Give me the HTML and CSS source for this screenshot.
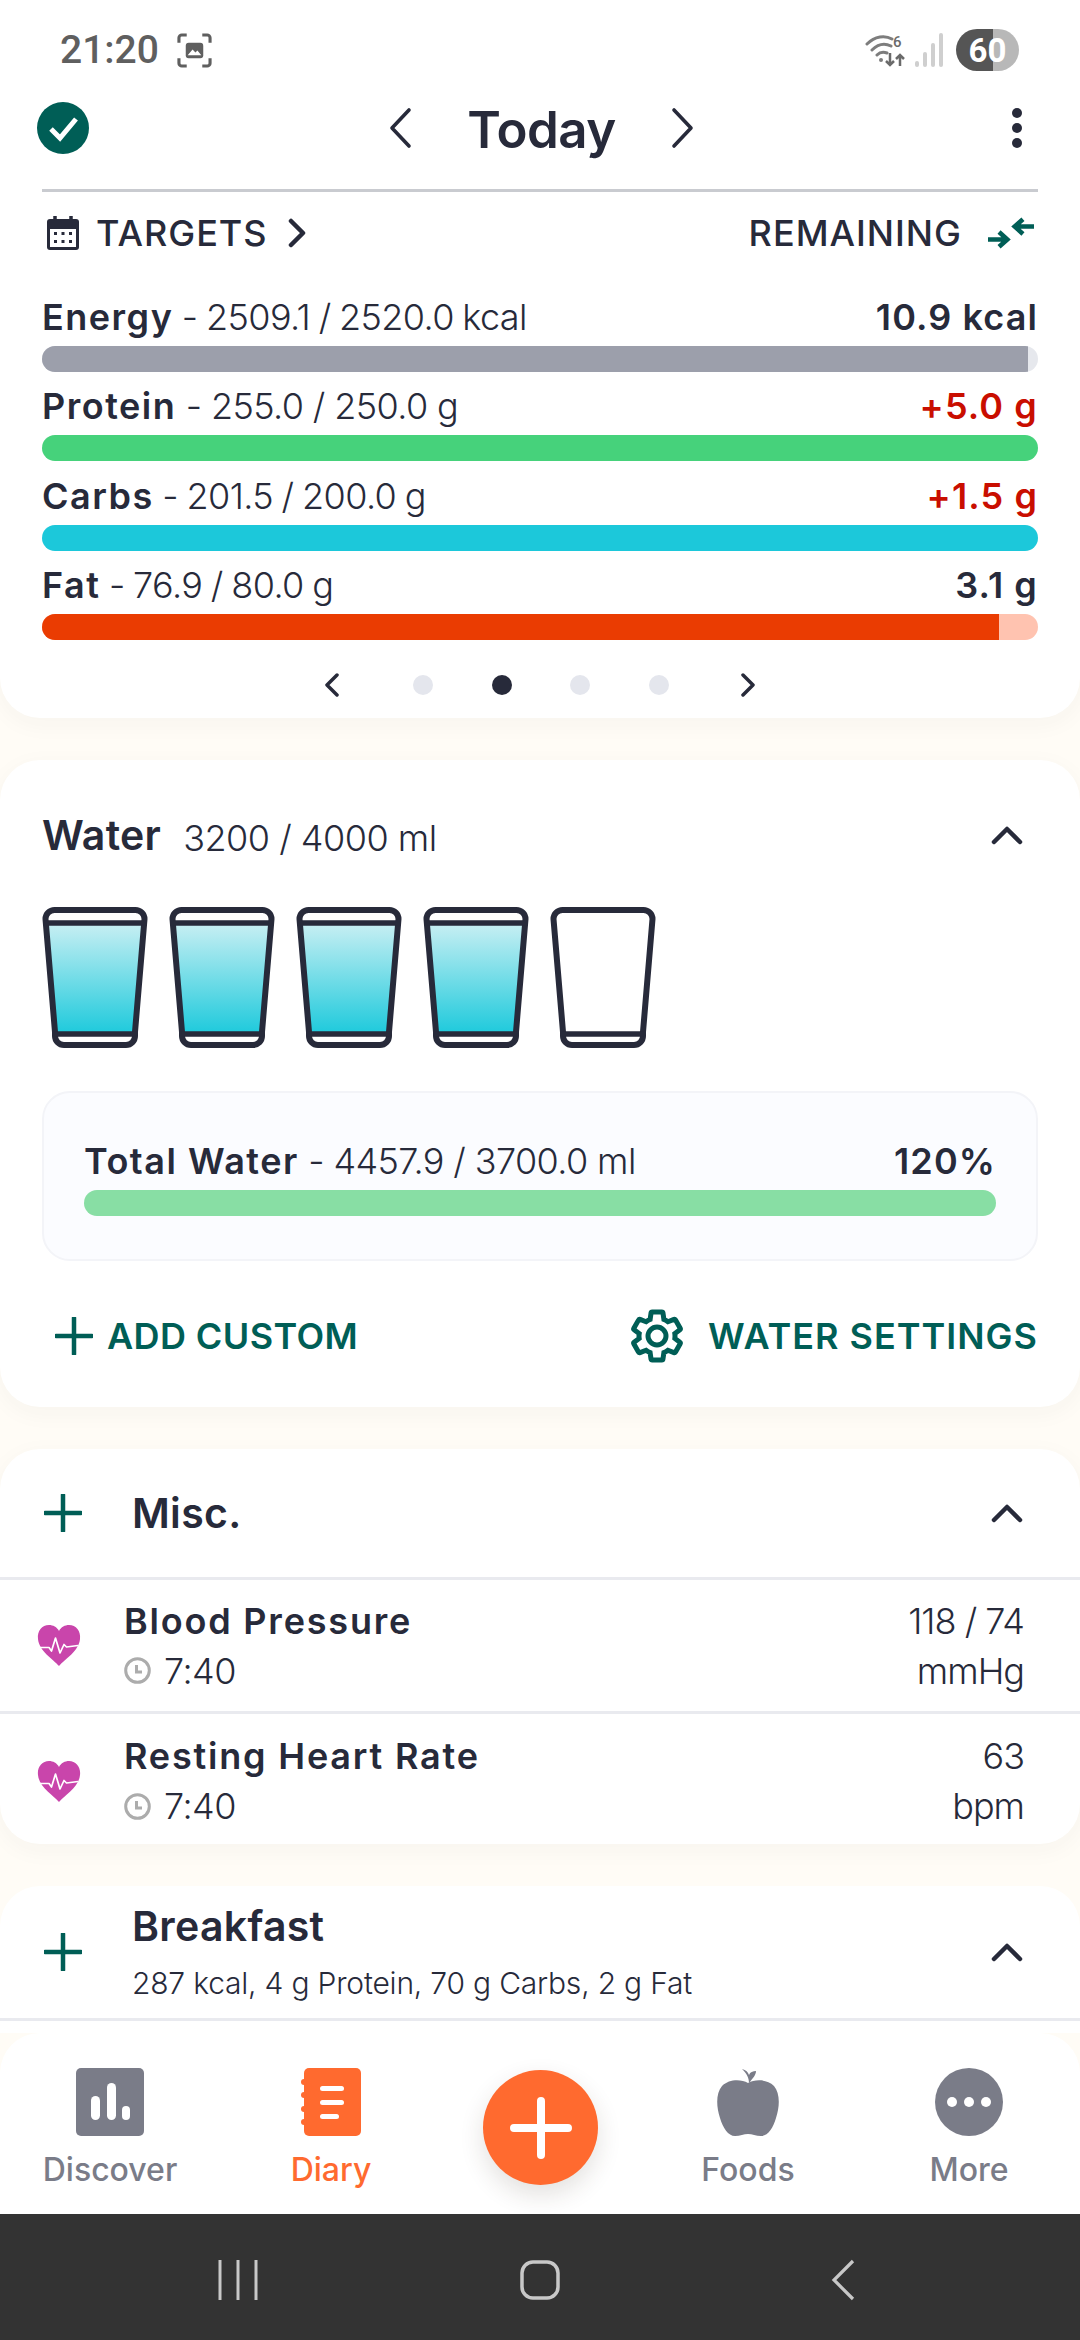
FILE: index.html
```html
<!DOCTYPE html>
<html lang="en">
<head>
<meta charset="utf-8">
<title>Diary</title>
<link rel="stylesheet" href="styles.css">
</head>
<body>
<svg class="defs" aria-hidden="true">
  <defs>
    <linearGradient id="water" x1="0" y1="0" x2="0" y2="1">
      <stop offset="0" stop-color="#c8eff3"/>
      <stop offset="1" stop-color="#1fcadc"/>
    </linearGradient>
    <symbol id="plus" viewBox="0 0 38 38"><path d="M19 1V37M1 19H37" fill="none" stroke="currentColor" stroke-width="4.5" stroke-linecap="round"/></symbol>
    <symbol id="chev-up" viewBox="0 0 32 20"><path d="M3 17 16 4 29 17" fill="none" stroke="#272a3a" stroke-width="4.5" stroke-linecap="round" stroke-linejoin="round"/></symbol>
    <symbol id="heart" viewBox="0 0 44 41">
      <path d="M22 41C16 34 2 26 1 14 0 6 5 0 12 0 16 0 20 2 22 6 24 2 28 0 32 0 39 0 44 6 43 14 42 26 28 34 22 41Z" fill="#c945ab"/>
      <path d="M3 22.500H12L14.500 26 18.500 13 23 28 27 19.500 29.500 22 41 20.500" fill="none" stroke="#fff" stroke-width="1.700" stroke-linejoin="round"/>
    </symbol>
    <symbol id="clock" viewBox="0 0 27 27">
      <circle cx="13.500" cy="13.500" r="11.800" fill="none" stroke="#acacac" stroke-width="3"/>
      <path d="M12.500 8V15H18" fill="none" stroke="#acacac" stroke-width="3"/>
    </symbol>
    <symbol id="glass" viewBox="0 0 106 141">
      <path d="M3.500 12a9 9 0 0 1 9-9h81a9 9 0 0 1 9 9L93 125v4a9 9 0 0 1-9 9H22a9 9 0 0 1-9-9v-4Z" fill="#fff" stroke="#272a3a" stroke-width="6" stroke-linejoin="round"/>
      <path d="M12.500 127H93.500" fill="none" stroke="#272a3a" stroke-width="5.500"/>
    </symbol>
    <symbol id="glass-full" viewBox="0 0 106 141">
      <path d="M5 16H101L93 126H13Z" fill="url(#water)"/>
      <path d="M3.500 12a9 9 0 0 1 9-9h81a9 9 0 0 1 9 9L93 125v4a9 9 0 0 1-9 9H22a9 9 0 0 1-9-9v-4Z" fill="none" stroke="#272a3a" stroke-width="6" stroke-linejoin="round"/>
      <path d="M4 16H102M12.500 127H93.500" fill="none" stroke="#272a3a" stroke-width="5.500"/>
    </symbol>
  </defs>
</svg>

<div class="app">
  <main class="scroll">
    <section class="card top-card">
      <div class="status">
        <div class="status-left">
          <span class="clock-text">21:20</span>
          <svg class="shot" viewBox="0 0 36 36"><path d="M2 10V5a3 3 0 0 1 3-3h5M26 2h5a3 3 0 0 1 3 3v5M34 26v5a3 3 0 0 1-3 3h-5M10 34H5a3 3 0 0 1-3-3v-5" fill="none" stroke="#5f5f5f" stroke-width="3.200"/><rect x="9" y="10" width="18" height="16" rx="3" fill="#5f5f5f"/><path d="M11 23l5-6 3 3 2-2 4 5Z" fill="#fff"/></svg>
        </div>
        <div class="status-right">
          <svg class="wifi" viewBox="0 0 40 34"><path d="M2 11C10 3 20 2 27 6M7 17C13 11 20 10 26 13M12 22c3-3 7-3 10-2" fill="none" stroke="#7d7d7d" stroke-width="3" stroke-linecap="round"/><circle cx="16" cy="27" r="2" fill="#7d7d7d"/><path d="M25 20V32M21 28l4 4 4-4M35 33V22M31 26l4-4 4 4" fill="none" stroke="#6a6a6a" stroke-width="2.500"/><text class="wifi-six" x="28" y="14">6</text></svg>
          <svg class="signal" viewBox="0 0 28 36"><g fill="#cfcfcf"><rect x="0" y="29" width="4" height="6" rx="2"/><rect x="8" y="20" width="4" height="15" rx="2"/><rect x="16" y="11" width="4" height="24" rx="2"/><rect x="24" y="1" width="4" height="34" rx="2"/></g></svg>
          <div class="battery"><span>60</span></div>
        </div>
      </div>

      <header class="day">
        <svg class="done" viewBox="0 0 52 52"><circle cx="26" cy="26" r="26" fill="#005e56"/><path d="M14 27 23 36 39 17" fill="none" stroke="#fff" stroke-width="5"/></svg>
        <div class="day-nav">
          <svg class="day-arrow" viewBox="0 0 24 42"><path d="M21 3 4 21 21 39" fill="none" stroke="#272a3a" stroke-width="3.600" stroke-linecap="round" stroke-linejoin="round"/></svg>
          <h1>Today</h1>
          <svg class="day-arrow" viewBox="0 0 24 42"><path d="M3 3 20 21 3 39" fill="none" stroke="#272a3a" stroke-width="3.600" stroke-linecap="round" stroke-linejoin="round"/></svg>
        </div>
        <svg class="kebab" viewBox="0 0 12 42"><g fill="#272a3a"><circle cx="6" cy="6" r="5"/><circle cx="6" cy="21" r="5"/><circle cx="6" cy="36" r="5"/></g></svg>
      </header>

      <div class="rule"></div>

      <div class="targets">
        <div class="targets-left">
          <svg class="cal" viewBox="0 0 32 34"><path d="M8 0v5M24 0v5" stroke="#272a3a" stroke-width="3.500"/><rect y="3" width="32" height="31" rx="3" fill="#272a3a"/><rect x="3" y="13" width="26" height="18" fill="#fff"/><g fill="#272a3a"><rect x="7" y="16" width="3" height="3"/><rect x="14.500" y="16" width="3" height="3"/><rect x="22" y="16" width="3" height="3"/><rect x="7" y="24" width="3" height="3"/><rect x="14.500" y="24" width="3" height="3"/><rect x="22" y="24" width="3" height="3"/></g></svg>
          <span>TARGETS</span>
          <svg class="tchev" viewBox="0 0 18 30"><path d="M3 3 15 15 3 27" fill="none" stroke="#272a3a" stroke-width="4.500" stroke-linecap="round" stroke-linejoin="round"/></svg>
        </div>
        <div class="targets-right">
          <span>REMAINING</span>
          <svg class="swap" viewBox="0 0 50 34"><path d="M50 10H30M38 2 29 10 38 18M0 24H20M12 16 21 24 12 32" fill="none" stroke="#005e56" stroke-width="5"/></svg>
        </div>
      </div>

      <div class="metrics">
        <div class="metric">
          <div class="metric-row"><span class="tight"><b>Energy</b> - 2509.1 / 2520.0 kcal</span><b>10.9 kcal</b></div>
          <div class="bar bar-energy"><i style="width:99%"></i></div>
        </div>
        <div class="metric">
          <div class="metric-row"><span><b>Protein</b> - 255.0 / 250.0 g</span><b class="over">+5.0 g</b></div>
          <div class="bar bar-protein"><i style="width:100%"></i></div>
        </div>
        <div class="metric">
          <div class="metric-row"><span class="tight"><b>Carbs</b> - 201.5 / 200.0 g</span><b class="over">+1.5 g</b></div>
          <div class="bar bar-carbs"><i style="width:100%"></i></div>
        </div>
        <div class="metric">
          <div class="metric-row"><span class="tight"><b>Fat</b> - 76.9 / 80.0 g</span><b>3.1 g</b></div>
          <div class="bar bar-fat"><i style="width:96.1%"></i></div>
        </div>
      </div>

      <div class="pager">
        <svg class="pager-arrow" viewBox="0 0 16 24"><path d="M13 2 3 12 13 22" fill="none" stroke="#272a3a" stroke-width="3.500" stroke-linecap="round" stroke-linejoin="round"/></svg>
        <span class="dot"></span>
        <span class="dot dot-on"></span>
        <span class="dot"></span>
        <span class="dot"></span>
        <svg class="pager-arrow" viewBox="0 0 16 24"><path d="M3 2 13 12 3 22" fill="none" stroke="#272a3a" stroke-width="3.500" stroke-linecap="round" stroke-linejoin="round"/></svg>
      </div>
    </section>

    <section class="card water-card">
      <div class="water-head">
        <h2>Water</h2>
        <span class="water-amount">3200 / 4000 ml</span>
        <svg class="chev"><use href="#chev-up"/></svg>
      </div>
      <div class="glasses">
        <svg class="glass"><use href="#glass-full"/></svg>
        <svg class="glass"><use href="#glass-full"/></svg>
        <svg class="glass"><use href="#glass-full"/></svg>
        <svg class="glass"><use href="#glass-full"/></svg>
        <svg class="glass"><use href="#glass"/></svg>
      </div>
      <div class="total">
        <div class="metric-row"><span><b>Total Water</b> - 4457.9 / 3700.0 ml</span><b>120%</b></div>
        <div class="bar bar-total"><i style="width:100%"></i></div>
      </div>
      <div class="water-actions">
        <div class="action">
          <svg class="action-plus"><use href="#plus"/></svg>
          <span>ADD CUSTOM</span>
        </div>
        <div class="action action-settings">
          <svg class="gear" viewBox="0 0 24 24"><path d="M19.140 12.940c.04-.3.06-.61.06-.94 0-.32-.02-.64-.07-.94l2.030-1.580c.18-.14.23-.41.12-.61l-1.920-3.320c-.12-.22-.37-.29-.59-.22l-2.390.96c-.5-.38-1.030-.7-1.620-.94l-.36-2.540c-.04-.24-.24-.41-.48-.41h-3.840c-.24 0-.43.17-.47.41l-.36 2.540c-.59.24-1.130.57-1.620.94l-2.390-.96c-.22-.08-.47 0-.59.22L2.740 8.870c-.12.21-.08.47.12.61l2.030 1.580c-.05.3-.09.63-.09.94s.02.64.07.94l-2.030 1.580c-.18.14-.23.41-.12.61l1.920 3.320c.12.22.37.29.59.22l2.390-.96c.5.38 1.030.7 1.620.94l.36 2.540c.05.24.24.41.48.41h3.840c.24 0 .44-.17.47-.41l.36-2.540c.59-.24 1.130-.56 1.620-.94l2.390.96c.22.08.47 0 .59-.22l1.920-3.320c.12-.22.07-.47-.12-.61l-2.010-1.580zM12 15.600c-1.980 0-3.600-1.620-3.600-3.600s1.620-3.600 3.600-3.600 3.600 1.620 3.600 3.600-1.620 3.600-3.600 3.600z" fill="none" stroke="#005e56" stroke-width="2"/></svg>
          <span>WATER SETTINGS</span>
        </div>
      </div>
    </section>

    <section class="card misc-card">
      <div class="section-head misc-head">
        <svg class="section-plus"><use href="#plus"/></svg>
        <div class="section-title"><h2>Misc.</h2></div>
        <svg class="chev"><use href="#chev-up"/></svg>
      </div>
      <div class="entry">
        <svg class="heart"><use href="#heart"/></svg>
        <div class="entry-main">
          <div class="entry-name">Blood Pressure</div>
          <div class="entry-time"><svg class="clock"><use href="#clock"/></svg><span>7:40</span></div>
        </div>
        <div class="entry-value"><div>118 / 74</div><div>mmHg</div></div>
      </div>
      <div class="entry">
        <svg class="heart"><use href="#heart"/></svg>
        <div class="entry-main">
          <div class="entry-name">Resting Heart Rate</div>
          <div class="entry-time"><svg class="clock"><use href="#clock"/></svg><span>7:40</span></div>
        </div>
        <div class="entry-value"><div>63</div><div>bpm</div></div>
      </div>
    </section>

    <section class="card meal-card">
      <div class="section-head meal-head">
        <svg class="section-plus"><use href="#plus"/></svg>
        <div class="section-title">
          <h2>Breakfast</h2>
          <p>287 kcal, 4 g Protein, 70 g Carbs, 2 g Fat</p>
        </div>
        <svg class="chev"><use href="#chev-up"/></svg>
      </div>
    </section>
  </main>

  <nav class="tabs">
    <div class="tab">
      <svg class="tab-icon" viewBox="0 0 68 68"><rect width="68" height="68" rx="5" fill="#7a7c88"/><g fill="#fff"><rect x="15" y="28" width="9" height="24" rx="4.500"/><rect x="31" y="15" width="9" height="37" rx="4.500"/><rect x="46" y="38" width="8" height="14" rx="4"/></g></svg>
      <span>Discover</span>
    </div>
    <div class="tab tab-on">
      <svg class="tab-icon" viewBox="0 0 60 68"><rect x="3" width="57" height="68" rx="5" fill="#ff6a2f"/><g fill="#ff6a2f"><circle cx="3" cy="14" r="3"/><circle cx="3" cy="27" r="3"/><circle cx="3" cy="41" r="3"/><circle cx="3" cy="54" r="3"/></g><g fill="#fff"><rect x="19" y="18" width="24" height="5" rx="2.500"/><rect x="19" y="32" width="24" height="5" rx="2.500"/><rect x="19" y="46" width="19" height="5" rx="2.500"/></g></svg>
      <span>Diary</span>
    </div>
    <div class="fab">
      <svg class="fab-plus" viewBox="0 0 62 62"><path d="M31 4V58M4 31H58" stroke="#fff" stroke-width="8" stroke-linecap="round"/></svg>
    </div>
    <div class="tab">
      <svg class="tab-icon" viewBox="0 0 62 68"><path d="M31 15C24 11 12 11 5 18-1 25-1 38 3 50 6 60 11 68 18 68 23 68 27 66 31 66 35 66 39 68 44 68 51 68 56 60 59 50 63 38 63 25 57 18 50 11 38 11 31 15Z" fill="#7a7c88"/><path d="M32 15C32 10 30 6 25 1 29 2 31 4 32 7 33 4 36 3 39 3 39 7 36 10 32 15Z" fill="#7a7c88"/></svg>
      <span>Foods</span>
    </div>
    <div class="tab">
      <svg class="tab-icon" viewBox="0 0 68 68"><circle cx="34" cy="34" r="34" fill="#7a7c88"/><g fill="#fff"><circle cx="17" cy="34" r="5"/><circle cx="34" cy="34" r="5"/><circle cx="51" cy="34" r="5"/></g></svg>
      <span>More</span>
    </div>
  </nav>

  <footer class="sysbar">
    <svg class="sys-recents" viewBox="0 0 40 40"><path d="M2 0V40M20 0V40M38 0V40" stroke="#c8c8c8" stroke-width="3"/></svg>
    <svg class="sys-home" viewBox="0 0 40 40"><rect x="2" y="2" width="36" height="36" rx="11" fill="none" stroke="#c8c8c8" stroke-width="3.500"/></svg>
    <svg class="sys-back" viewBox="0 0 24 42"><path d="M22 2 3 21 22 40" fill="none" stroke="#c8c8c8" stroke-width="3.200"/></svg>
  </footer>
</div>
</body>
</html>
```

FILE: styles.css
```css
* { box-sizing: border-box; }

html, body { margin: 0; padding: 0; }

body {
  width: 1080px;
  height: 2340px;
  overflow: hidden;
  font-family: "Inter", "Liberation Sans", sans-serif;
  color: #272a3a;
  background: #fffcf6;
}

h1, h2, p { margin: 0; }

svg { display: block; flex: none; }

.defs { width: 0; height: 0; }

.app {
  height: 2340px;
  display: flex;
  flex-direction: column;
}

.scroll {
  height: 2033px;
  overflow: hidden;
  background: #fffcf6;
  display: flex;
  flex-direction: column;
  gap: 42px;
}

.card {
  flex: none;
  background: #fff;
  border-radius: 40px;
  box-shadow: 0 6px 24px rgba(60, 60, 40, .04);
}

.top-card {
  height: 718px;
  padding: 0 42px;
  border-radius: 0 0 40px 40px;
}

.status {
  height: 96px;
  margin: 0 19px 0 18px;
  display: flex;
  align-items: center;
  justify-content: space-between;
  padding-top: 4px;
}

.status-left { display: flex; align-items: center; gap: 18px; }

.clock-text {
  font-family: "Roboto", sans-serif;
  font-size: 39px;
  font-weight: 500;
  color: #5f5f5f;
}

.shot { width: 35px; height: 35px; }

.status-right { display: flex; align-items: center; gap: 10px; }

.wifi { width: 40px; height: 34px; }

.wifi-six {
  font-family: "Roboto", sans-serif;
  font-size: 15px;
  font-weight: 500;
  fill: #6a6a6a;
}

.signal { width: 28px; height: 36px; margin-right: 3px; }

.battery {
  width: 63px;
  height: 42px;
  border-radius: 21px;
  background: linear-gradient(90deg, #555 0 59%, #b8b8b8 59% 100%);
  color: #fff;
  display: flex;
  align-items: center;
  justify-content: center;
  font-family: "Roboto", sans-serif;
  font-size: 33px;
  font-weight: 700;
}

.day {
  height: 64px;
  display: flex;
  align-items: center;
  justify-content: space-between;
  margin-left: -5px;
  padding-right: 15px;
}

.done { width: 52px; height: 52px; }

.day-nav {
  flex: 1;
  display: flex;
  align-items: center;
  justify-content: center;
  gap: 55px;
  padding-right: 17px;
}

.day-arrow { width: 24px; height: 42px; }

h1 {
  font-size: 51px;
  font-weight: 600;
  letter-spacing: -.5px;
  line-height: 64px;
  padding-top: 3px;
}

.kebab { width: 12px; height: 42px; }

.rule {
  height: 3px;
  margin-top: 29px;
  background: #c9cbd0;
}

.targets {
  height: 40px;
  margin-top: 21px;
  display: flex;
  align-items: center;
  justify-content: space-between;
  font-size: 36px;
  font-weight: 500;
  letter-spacing: 1px;
}

.targets-left { display: flex; align-items: center; gap: 17px; padding-left: 5px; }

.targets-right { display: flex; align-items: center; gap: 26px; padding-right: 4px; }

.cal { width: 32px; height: 34px; }

.tchev { width: 18px; height: 30px; margin-left: 3px; }

.swap { width: 46px; height: 32px; }

.metrics {
  margin-top: 41px;
  display: flex;
  flex-direction: column;
  gap: 11.300px;
}

.metric-row {
  height: 52px;
  display: flex;
  justify-content: space-between;
  align-items: center;
  font-size: 36px;
  font-weight: 300;
  line-height: 46px;
  padding-bottom: 6px;
}

.metric-row b { font-weight: 600; letter-spacing: 1.100px; }

.metric-row span { letter-spacing: -.6px; }

.metric-row span b { letter-spacing: 1.500px; }

.metric-row .tight { word-spacing: -1px; }

.over { color: #c90e00; }

.bar {
  height: 26px;
  border-radius: 13px;
  overflow: hidden;
}

.bar i { display: block; height: 100%; }

.bar-energy { background: #e6e8ed; }
.bar-energy i { background: #9c9fab; }
.bar-protein { background: #c8f0d5; }
.bar-protein i { background: #46d27b; }
.bar-carbs { background: #c0eff4; }
.bar-carbs i { background: #1cc8da; }
.bar-fat { background: #ffc3b0; }
.bar-fat i { background: #ea3c02; }
.bar-total { background: #88dea4; }
.bar-total i { background: #88dea4; }

.pager {
  margin-top: 34px;
  height: 22px;
  display: flex;
  align-items: center;
  justify-content: center;
}

.pager-arrow { width: 16px; height: 24px; }

.dot {
  width: 20px;
  height: 20px;
  border-radius: 50%;
  background: #e4e6ed;
  margin-left: 58.800px;
}

.dot:nth-of-type(1) { margin-left: 73px; }

.dot-on { background: #272a3a; }

.pager .pager-arrow:last-child { margin-left: 71px; }

.water-card {
  height: 647px;
  padding: 0 42px;
}

.water-head {
  height: 150px;
  display: flex;
  align-items: center;
  gap: 22px;
  padding-right: 15px;
}

h2 {
  font-size: 41px;
  font-weight: 600;
  letter-spacing: .3px;
  line-height: 48px;
}

.water-amount {
  font-size: 36px;
  font-weight: 300;
  letter-spacing: -.5px;
  padding-top: 6px;
  flex: 1;
}

.chev { width: 32px; height: 20px; }

.glasses {
  display: flex;
  gap: 21px;
  margin-top: -3px;
}

.glass { width: 106px; height: 141px; }

.total {
  height: 170px;
  margin-top: 43px;
  padding: 45px 40px 0;
  background: #fbfcff;
  border: 2px solid #f3f4f8;
  border-radius: 28px;
}

.water-actions {
  margin-top: 45px;
  height: 60px;
  display: flex;
  align-items: center;
  justify-content: space-between;
  color: #005e56;
  font-size: 36px;
  font-weight: 600;
}

.action { display: flex; align-items: center; gap: 14px; padding-left: 13px; letter-spacing: .4px; }

.action-settings { gap: 21px; padding-left: 0; letter-spacing: 1px; }

.action-plus { width: 38px; height: 38px; }

.gear { width: 60px; height: 60px; }

.misc-card { height: 395px; }

.section-head {
  display: flex;
  align-items: center;
  padding: 0 57px 0 44px;
  border-bottom: 3px solid #e9eaef;
}

.misc-head { height: 131px; }

.meal-head { height: 135px; }

.section-plus { width: 38px; height: 38px; color: #005e56; }

.section-title { flex: 1; padding-left: 50px; }

.section-title p {
  font-size: 30px;
  font-weight: 300;
  letter-spacing: -.2px;
  line-height: 40px;
  margin-top: 13px;
}

.entry {
  height: 134px;
  display: flex;
  align-items: center;
  padding: 0 56px 0 37px;
  border-bottom: 3px solid #e9eaef;
}

.entry:last-child { border-bottom: 0; }

.heart { width: 44px; height: 41px; }

.entry-main {
  flex: 1;
  padding-left: 43px;
}

.entry-name {
  font-size: 36px;
  font-weight: 600;
  letter-spacing: 1.800px;
  line-height: 44px;
}

.entry-time {
  display: flex;
  align-items: center;
  gap: 13px;
  font-size: 36px;
  font-weight: 300;
  letter-spacing: -.5px;
  line-height: 44px;
  margin-top: 6px;
}

.clock { width: 27px; height: 27px; }

.entry-value {
  text-align: right;
  font-size: 36px;
  font-weight: 300;
  line-height: 50px;
  letter-spacing: -1px;
}

.meal-card {
  height: 200px;
  box-shadow: none;
  border-radius: 40px 40px 0 0;
}

.tabs {
  height: 181px;
  position: relative;
  display: flex;
  background: #fff;
  border-radius: 40px 40px 0 0;
}

.tab {
  flex: none;
  position: absolute;
  top: 35px;
  width: 200px;
  display: flex;
  flex-direction: column;
  align-items: center;
  color: #7a7c88;
  font-size: 32px;
  font-weight: 500;
  line-height: 40px;
}

.tab span { margin-top: 14px; }

.tab:nth-child(1) { left: 10px; }
.tab:nth-child(2) { left: 231px; }
.tab:nth-child(4) { left: 648px; }
.tab:nth-child(5) { left: 869px; }

.tab-on { color: #ff6a2f; }

.tab-icon { height: 68px; width: auto; }

.tab:nth-child(1) .tab-icon, .tab:nth-child(5) .tab-icon { width: 68px; }
.tab:nth-child(2) .tab-icon { width: 60px; }
.tab:nth-child(4) .tab-icon { width: 62px; }

.fab {
  position: absolute;
  left: 483px;
  top: 37px;
  width: 115px;
  height: 115px;
  border-radius: 50%;
  background: #ff6a2f;
  box-shadow: 0 10px 24px rgba(60, 40, 30, .14);
  display: flex;
  align-items: center;
  justify-content: center;
}

.fab-plus { width: 62px; height: 62px; }

.sysbar {
  height: 126px;
  background: #333;
  display: flex;
  align-items: center;
  padding-top: 6px;
}

.sys-recents { width: 40px; height: 40px; margin-left: 218px; }
.sys-home { width: 40px; height: 40px; margin-left: 262px; }
.sys-back { width: 24px; height: 42px; margin-left: 271px; }
```
